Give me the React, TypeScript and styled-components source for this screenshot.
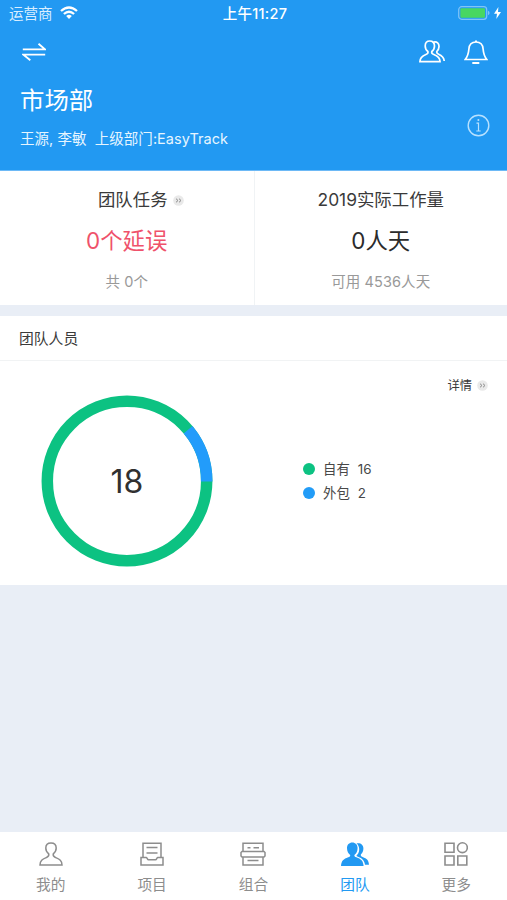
import React from "react";
import styled, { createGlobalStyle } from "styled-components";

const blue = "#2299f2";
const green = "#0cc282";

const GlobalStyle = createGlobalStyle`
  * { box-sizing: border-box; }
  body { margin: 0; background: #e9eef6; }
  svg { display: block; flex: none; }
`;

const Screen = styled.main`
  width: 100%;
  height: 900px;
  display: flex;
  flex-direction: column;
  overflow: hidden;
  background: #e9eef6;
  color: #3a3a3a;
  font-family: Inter, "Noto Sans CJK SC", sans-serif;
`;

const Header = styled.header`
  height: 171px;
  flex: none;
  background: ${blue};
  color: #fff;
  border-bottom: 1px solid #6db9f6;
`;

const StatusBar = styled.div`
  height: 28px;
  display: grid;
  grid-template-columns: 1fr auto 1fr;
  align-items: center;
  padding: 0 6px 0 9px;
  font-size: 14.5px;
  line-height: 28px;
`;

const Carrier = styled.div`
  display: flex;
  align-items: center;
  gap: 7px;
  color: #d9eeff;

  svg { margin-top: -2px; }
`;

const Clock = styled.div`
  font-size: 14.5px;
  font-weight: 500;
  letter-spacing: 0.25px;
`;

const Power = styled.div`
  display: flex;
  align-items: center;
  justify-content: flex-end;
  gap: 4px;
  margin-top: -2px;
`;

const NavBar = styled.nav`
  height: 48px;
  display: flex;
  align-items: center;
  justify-content: space-between;
  padding: 0 19.5px 0 22px;
`;

const NavActions = styled.div`
  display: flex;
  gap: 19px;
`;

const Department = styled.section`
  display: flex;
  align-items: center;
  justify-content: space-between;
  padding: 4px 17px 0 20px;

  & > svg { margin-top: 14px; }
`;

const DepartmentName = styled.h1`
  margin: 0;
  font-size: 24.4px;
  font-weight: 400;
  line-height: 40px;
`;

const DepartmentMeta = styled.p`
  margin: 0;
  font-size: 14.5px;
  letter-spacing: 0.04px;
  line-height: 37px;
  white-space: pre;
  color: #e6f5ff;
`;

const Stats = styled.section`
  height: 134px;
  flex: none;
  display: grid;
  grid-template-columns: 1fr 1fr;
  background: #fff;
`;

const Stat = styled.article`
  display: flex;
  flex-direction: column;
  align-items: center;
  padding-top: 14px;

  & + & { border-left: 1px solid #f0f3f5; }
`;

const StatTitle = styled.h2<{ $indent?: number }>`
  margin: 0;
  display: flex;
  align-items: center;
  gap: 5px;
  padding-left: ${({ $indent = 0 }) => $indent}px;
  font-size: 17.4px;
  font-weight: 400;
  line-height: 30px;
`;

const StatValue = styled.strong<{ $danger?: boolean }>`
  margin-top: 6px;
  font-size: 22.4px;
  font-weight: 400;
  line-height: 40px;
  color: ${({ $danger }) => ($danger ? "#ef526b" : "#2b2b2b")};
`;

const StatNote = styled.span`
  margin-top: 7px;
  font-size: 14.5px;
  letter-spacing: 0.1px;
  line-height: 28px;
  color: #999;
`;

const Members = styled.section`
  height: 269px;
  flex: none;
  display: flex;
  flex-direction: column;
  margin-top: 11px;
  background: #fff;
`;

const MembersTitle = styled.h2`
  margin: 0;
  height: 45px;
  padding-left: 19px;
  border-bottom: 1px solid #f1f3f4;
  font-size: 14.8px;
  font-weight: 400;
  line-height: 46px;
`;

const DetailLink = styled.a`
  height: 34px;
  display: flex;
  align-items: center;
  justify-content: flex-end;
  gap: 5px;
  padding: 14px 19px 0 0;
  font-size: 12.3px;
  line-height: 20px;

  span { padding-top: 2px; }
`;

const ChartRow = styled.div`
  display: grid;
  grid-template-columns: 254px 1fr;
  align-items: center;
`;

const Donut = styled.figure`
  margin: 0;
  display: grid;
  place-items: center;

  & > * { grid-area: 1 / 1; }
`;

const Total = styled.figcaption`
  padding-top: 2px;
  font-size: 32px;
  line-height: 40px;
  color: #303030;
`;

const Legend = styled.ul`
  margin: 0;
  padding: 0 0 0 49px;
  list-style: none;
`;

const LegendItem = styled.li<{ $color: string }>`
  display: flex;
  align-items: center;
  gap: 8px;
  font-size: 13.4px;
  line-height: 24.5px;
  color: #484848;

  &::before {
    content: "";
    width: 12px;
    height: 12px;
    border-radius: 50%;
    background: ${({ $color }) => $color};
  }
`;

const TabBar = styled.nav`
  height: 68px;
  flex: none;
  margin-top: auto;
  display: grid;
  grid-template-columns: repeat(5, 1fr);
  background: #fff;
`;

const Tab = styled.a<{ $active?: boolean }>`
  display: flex;
  flex-direction: column;
  align-items: center;
  padding-top: 10px;
  gap: 7px;
  font-size: 14.7px;
  line-height: 24px;
  color: ${({ $active }) => ($active ? blue : "#8d8d8d")};
`;

const WifiIcon = () => (
  <svg width="18" height="14" viewBox="0 0 18 14" fill="none" stroke="#fff" strokeWidth="2.3">
    <path d="M1 5Q9-2 17 5M3.9 8Q9 3.5 14.1 8" />
    <path d="M6.2 10Q9 7.7 11.800 10L9 13Z" fill="#fff" stroke="none" />
  </svg>
);

const BatteryIcon = () => (
  <svg width="32" height="14" viewBox="0 0 32 14">
    <rect x=".7" y=".7" width="28" height="12.600" rx="3" fill="none" stroke="#80c5f8" strokeWidth="1.200" />
    <rect x="2.400" y="2.300" width="24.600" height="9.400" rx="1" fill="#48d762" />
    <path d="M30 4.800Q31.600 5.400 31.600 7T30 9.200Z" fill="#80c5f8" />
  </svg>
);

const BoltIcon = () => (
  <svg width="7" height="12" viewBox="0 0 7 12" fill="#fff">
    <path d="M4.400 0 0 6.700H3L2.300 12 7 5H4Z" />
  </svg>
);

const SwitchIcon = () => (
  <svg width="24" height="18" viewBox="0 0 24 18" fill="none" stroke="#fff" strokeWidth="1.800">
    <path d="M.8 6.400H23L16.500.8M23.200 11.700H1.500L8.300 17.300" />
  </svg>
);

const PeopleIcon = () => (
  <svg width="26" height="23" viewBox="0 0 26 23" fill="none" stroke="#fff" strokeWidth="1.700">
    <path d="M10.800 1C8 1 6.200 3 6.200 6c0 2.400 1.100 4.300 2.700 5.500.5 1.700-.4 2.400-2 3C3.300 15.900.9 17.400.9 21.700h20.200c0-4.300-2.700-5.800-6.300-7.200-1.700-.6-2.500-1.300-2-3 1.600-1.200 2.700-3.100 2.700-5.500 0-3-1.900-5-4.700-5Z" />
    <path d="M14.500 2.100c3.500-.8 5.700 1.200 5.500 4.500-.1 2-.8 3.600-2.100 4.800-.5 1.400.2 2.200 1.700 2.800 3.600 1.500 5.400 2.900 5.600 6.800" />
  </svg>
);

const BellIcon = () => (
  <svg width="24" height="25" viewBox="0 0 24 25" fill="none" stroke="#fff" strokeWidth="1.700">
    <path d="M12 2C8 2 5.200 4.600 4.900 9 4.600 12.800 4.200 15.800 1.200 19.500H22.800C19.800 15.800 19.400 12.800 19.100 9 18.800 4.600 16 2 12 2Z" />
    <path d="M8.300 23h7M12 .5V2" strokeWidth="2" />
  </svg>
);

const InfoIcon = () => (
  <svg width="23" height="23" viewBox="0 0 23 23" fill="none" stroke="#b8e1ff" strokeWidth="1.400">
    <circle cx="11.500" cy="11.500" r="10.300" />
    <path d="M9.500 9.200h2v7.700M9.300 17h4.400" strokeWidth="1.200" />
    <circle cx="11.400" cy="6" r="1" fill="#b8e1ff" stroke="none" />
  </svg>
);

const MoreBadge = () => (
  <svg width="11" height="11" viewBox="0 0 11 11" fill="none">
    <circle cx="5.500" cy="5.500" r="5.300" fill="#e9e9e9" />
    <path d="m3 3.700 2 1.800-2 1.800m3-3.600 2 1.800-2 1.800" stroke="#8d8d8d" />
  </svg>
);

const DonutIcon = () => (
  <svg width="172" height="172" viewBox="0 0 172 172" fill="none" strokeWidth="11.500">
    <circle cx="86" cy="86" r="79.700" stroke={green} />
    <path d="M147.050 34.770A79.700 79.700 0 0 1 165.700 86.500" stroke="#229cfb" />
  </svg>
);

const MineIcon = () => (
  <svg width="24" height="24" viewBox="0 0 24 24" fill="none" stroke="currentColor" strokeWidth="1.500">
    <path d="M12 1C8.600 1 6.800 3 6.800 6c0 2.500 1.200 4.500 2.900 5.800.6 2-.5 2.900-2.200 3.700C3.600 17.200 1 18.200 1 23h22c0-4.800-2.600-5.800-6.500-7.500-1.700-.8-2.800-1.700-2.200-3.700C16 10.500 17.200 8.500 17.200 6c0-3-1.800-5-5.200-5Z" />
  </svg>
);

const ProjectIcon = () => (
  <svg width="24" height="24" viewBox="0 0 24 24" fill="none" stroke="currentColor" strokeWidth="1.500">
    <path d="M3 15.500V1.300h18v14.200M6.500 5.500h11M6.500 11h11M1 23h22v-7.500h-5.200c-1 0-1.100 2.300-2.300 2.300h-7c-1.200 0-1.300-2.300-2.300-2.300H1Z" />
  </svg>
);

const PortfolioIcon = () => (
  <svg width="26" height="24" viewBox="0 0 26 24" fill="none" stroke="currentColor" strokeWidth="1.500">
    <path d="M3 9.300V1.300h20v8M3 15v8h20v-8M7.500 5.800h3m3 0h5.500M7.500 18.500h11" />
    <path d="M2 9.500h22l1 1v3.500l-1 1H2l-1-1v-3.500Z" />
  </svg>
);

const TeamIcon = () => (
  <svg width="28" height="24" viewBox="0 0 28 24" fill="currentColor">
    <path d="M11.300.4C8.200.4 6 2.600 6 6c0 3.200 1.300 5.600 3.200 7 .2 1.300-.6 1.800-2 2.300C2.600 17 .3 18.800 0 24h22.600c-.3-5.200-2.600-7-7.200-8.700-1.500-.5-2.200-1-2-2.300 1.900-1.400 3.200-3.800 3.200-7 0-3.400-2.200-5.600-5.300-5.600Z" />
    <path d="M15.500 1.500c4-.8 6.900 1.300 6.900 5 0 2.500-.9 4.500-2.500 5.800-.4 1.400.2 2.100 1.700 2.700 4.400 1.700 6.100 3.400 6.400 7.700h-4c-.7-4.400-3.300-6.500-7.500-8.100-1.100-.4-1.300-.8-.5-1.500 1.900-1.700 2.500-4.400 2.100-7-.3-2-1.100-3.600-2.600-4.600Z" />
  </svg>
);

const GridIcon = () => (
  <svg width="24" height="24" viewBox="0 0 24 24" fill="none" stroke="currentColor" strokeWidth="1.600">
    <path d="M1 1.200h9v9H1zM1 14h9v9H1zM13.800 14h9v9h-9z" />
    <circle cx="18.400" cy="5.700" r="4.900" />
  </svg>
);

const tabs = [
  { label: "我的", Icon: MineIcon },
  { label: "项目", Icon: ProjectIcon },
  { label: "组合", Icon: PortfolioIcon },
  { label: "团队", Icon: TeamIcon, active: true },
  { label: "更多", Icon: GridIcon },
];

export default function App() {
  return (
    <Screen>
      <GlobalStyle />
      <Header>
        <StatusBar>
          <Carrier>运营商<WifiIcon /></Carrier>
          <Clock>上午11:27</Clock>
          <Power><BatteryIcon /><BoltIcon /></Power>
        </StatusBar>
        <NavBar>
          <SwitchIcon />
          <NavActions><PeopleIcon /><BellIcon /></NavActions>
        </NavBar>
        <Department>
          <div>
            <DepartmentName>市场部</DepartmentName>
            <DepartmentMeta>{"王源, 李敏  上级部门:EasyTrack"}</DepartmentMeta>
          </div>
          <InfoIcon />
        </Department>
      </Header>
      <Stats>
        <Stat>
          <StatTitle $indent={28}>团队任务<MoreBadge /></StatTitle>
          <StatValue $danger>0个延误</StatValue>
          <StatNote>共 0个</StatNote>
        </Stat>
        <Stat>
          <StatTitle>2019实际工作量</StatTitle>
          <StatValue>0人天</StatValue>
          <StatNote>可用 4536人天</StatNote>
        </Stat>
      </Stats>
      <Members>
        <MembersTitle>团队人员</MembersTitle>
        <DetailLink><span>详情</span><MoreBadge /></DetailLink>
        <ChartRow>
          <Donut><DonutIcon /><Total>18</Total></Donut>
          <Legend>
            <LegendItem $color={green}><span>自有</span><span>16</span></LegendItem>
            <LegendItem $color="#229cf7"><span>外包</span><span>2</span></LegendItem>
          </Legend>
        </ChartRow>
      </Members>
      <TabBar>
        {tabs.map(({ label, Icon, active }) => (
          <Tab key={label} $active={active}><Icon />{label}</Tab>
        ))}
      </TabBar>
    </Screen>
  );
}
